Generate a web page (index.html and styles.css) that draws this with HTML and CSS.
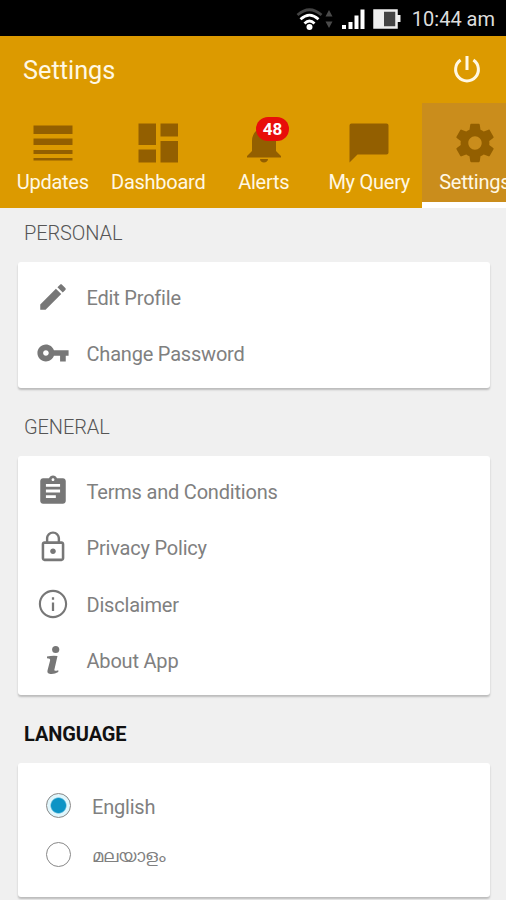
FILE: index.html
```html
<!DOCTYPE html>
<html lang="en">
<head>
<meta charset="utf-8">
<title>Settings</title>
<link rel="stylesheet" href="styles.css">
</head>
<body>
    <div class="statusbar">
        <svg class="wifi" width="27" height="24" viewBox="0 0 27 24" fill="none" stroke-width="2.800">
            <path d="M1.500 8Q13.500 -2.500 25.500 8" stroke="#444"/>
            <path d="M4.500 12.200Q13.500 4 22.500 12.200M8.500 16.500Q13.500 11.500 18.500 16.500" stroke="#fff"/>
            <circle cx="13.500" cy="20" r="3" fill="#fff"/>
        </svg>
        <svg class="updown" width="8" height="19" viewBox="0 0 8 19" fill="#4a4a4a">
            <path d="M4 0l3.500 6.500h-7zM4 18L.5 11.500h7z"/>
        </svg>
        <svg class="signal" width="25" height="22" viewBox="0 0 25 22" fill="#fff">
            <path d="M1 17h4v4H1zM7.500 14h4v7h-4zM13.500 7.500h4V21h-4zM19.500 1.500h4V21h-4z"/>
        </svg>
        <svg class="battery" width="28" height="20" viewBox="0 0 28 20">
            <path d="M1.500 1.500h22v17h-22z" fill="#444" stroke="#eee" stroke-width="2.500"/>
            <path d="M2 2h9v16H2zM24 6h3.500v7H24z" fill="#eee"/>
        </svg>
        <span class="clock">10:44 am</span>
    </div>

    <div class="header">
        <h1>Settings</h1>
        <svg class="power" width="28" height="28" viewBox="0 0 28 28" fill="none" stroke="#fff8e4" stroke-width="3">
            <path d="M14 1v14M7.600 5.100a11.400 11.400 0 1 0 12.800 0"/>
        </svg>
    </div>

    <div class="tabs">
        <div class="tab">
            <svg width="42" height="40" viewBox="0 0 42 40"><path d="M1.500 2.500h39V11h-39zM1.500 15.500h39v6.500h-39zM1.500 27h39v4h-39zM1.500 35h39v2.500h-39z"/></svg>
            <span>Updates</span>
        </div>
        <div class="tab">
            <svg width="40" height="40" viewBox="0 0 40 40"><path d="M.5.500H18v21.500H.500zM22.500.500H40v13H22.500zM.500 26.500H18v13H.500zM22.500 18H40v21.500H22.500z"/></svg>
            <span>Dashboard</span>
        </div>
        <div class="tab">
            <svg width="40" height="40" viewBox="0 0 40 40"><path d="M20 39.500c2.200 0 4-1.500 4-3.500h-8c0 2 1.800 3.500 4 3.500zM32 28V18c0-6.100-3.300-11.300-9-12.600V4a3 3 0 0 0-6 0v1.400C11.300 6.700 8 11.900 8 18v10l-5 5v1.500h34V33z"/></svg>
            <b class="badge">48</b>
            <span>Alerts</span>
        </div>
        <div class="tab">
            <svg width="40" height="40" viewBox="0 0 40 40"><path d="M2.500.500h35a2 2 0 0 1 2 2v27a2 2 0 0 1-2 2H8.500L.500 39.500v-37a2 2 0 0 1 2-2z"/></svg>
            <span>My Query</span>
        </div>
        <div class="tab active">
            <svg width="46" height="46" viewBox="0 0 24 24"><path d="M19.430 12.980c.04-.32.07-.64.07-.98s-.03-.66-.07-.98l2.110-1.650c.19-.15.240-.42.120-.64l-2-3.460c-.12-.22-.39-.3-.61-.22l-2.490 1c-.52-.4-1.080-.73-1.690-.98l-.38-2.650C14.460 2.180 14.250 2 14 2h-4c-.25 0-.46.180-.49.420l-.38 2.650c-.61.250-1.170.590-1.690.980l-2.490-1c-.23-.09-.49 0-.61.220l-2 3.460c-.13.220-.07.490.120.640l2.110 1.650c-.04.320-.07.650-.07.980s.03.660.07.980l-2.110 1.650c-.19.150-.24.420-.12.640l2 3.460c.12.220.39.300.610.220l2.490-1c.52.400 1.080.730 1.690.980l.38 2.650c.03.240.240.420.490.420h4c.25 0 .46-.18.490-.42l.38-2.650c.61-.25 1.170-.59 1.690-.98l2.490 1c.23.090.490 0 .610-.22l2-3.460c.12-.22.070-.49-.12-.64l-2.110-1.650zM12 15.500c-1.930 0-3.500-1.570-3.500-3.500s1.570-3.500 3.500-3.500 3.500 1.570 3.500 3.500-1.570 3.500-3.500 3.500z"/></svg>
            <span>Settings</span>
        </div>
    </div>

    <h2 class="first">PERSONAL</h2>
    <div class="card">
        <div class="row">
            <svg width="34" height="34" viewBox="0 0 24 24"><path d="M3 17.250V21h3.750L17.810 9.940l-3.750-3.750L3 17.250zM20.710 7.040c.39-.39.390-1.020 0-1.410l-2.340-2.340c-.39-.39-1.020-.39-1.410 0l-1.830 1.830 3.750 3.750 1.830-1.830z"/></svg>
            <span>Edit Profile</span>
        </div>
        <div class="row">
            <svg width="34" height="34" viewBox="0 0 24 24"><path d="M12.650 10C11.830 7.670 9.610 6 7 6c-3.310 0-6 2.690-6 6s2.690 6 6 6c2.610 0 4.830-1.670 5.650-4H17v4h4v-4h2v-4H12.650zM7 14c-1.100 0-2-.9-2-2s.9-2 2-2 2 .9 2 2-.9 2-2 2z"/></svg>
            <span>Change Password</span>
        </div>
    </div>

    <h2>GENERAL</h2>
    <div class="card general">
        <div class="row">
            <svg width="34" height="34" viewBox="0 0 24 24"><path d="M19 3h-4.180C14.400 1.840 13.300 1 12 1c-1.300 0-2.400.84-2.820 2H5c-1.100 0-2 .9-2 2v14c0 1.100.9 2 2 2h14c1.100 0 2-.9 2-2V5c0-1.100-.9-2-2-2zm-7 0c.55 0 1 .45 1 1s-.45 1-1 1-1-.45-1-1 .45-1 1-1zm2 14H7v-2h7v2zm3-4H7v-2h10v2zm0-4H7V7h10v2z"/></svg>
            <span>Terms and Conditions</span>
        </div>
        <div class="row">
            <svg width="34" height="34" viewBox="0 0 24 24"><path d="M12 17c1.100 0 2-.9 2-2s-.9-2-2-2-2 .9-2 2 .9 2 2 2zm6-9h-1V6c0-2.760-2.240-5-5-5S7 3.240 7 6v2H6c-1.100 0-2 .9-2 2v10c0 1.100.9 2 2 2h12c1.100 0 2-.9 2-2V10c0-1.100-.9-2-2-2zM8.700 6c0-1.800 1.500-3.300 3.300-3.300s3.300 1.500 3.300 3.300v2H8.700V6zM18.200 20.200H5.800V9.800h12.400v10.400z"/></svg>
            <span>Privacy Policy</span>
        </div>
        <div class="row">
            <svg width="34" height="34" viewBox="0 0 24 24"><path d="M11.200 17h1.600v-6h-1.600v6zM12 2C6.480 2 2 6.480 2 12s4.480 10 10 10 10-4.480 10-10S17.520 2 12 2zm0 18.500c-4.700 0-8.500-3.800-8.500-8.500s3.800-8.500 8.500-8.500 8.500 3.800 8.500 8.500-3.800 8.500-8.500 8.500zM11.200 9h1.600V7.300h-1.600V9z"/></svg>
            <span>Disclaimer</span>
        </div>
        <div class="row">
            <svg width="34" height="34" viewBox="0 0 34 34"><circle cx="19.700" cy="6.500" r="3.600"/><path d="M11 13.500q5-1 10.500-.5l-3.200 14q-.3 1.500 4 .3v1.700q-4 2.500-8 2-3.500-.5-2.800-3.500l2.600-10q.5-2.200-3.100-2.200z"/></svg>
            <span>About App</span>
        </div>
    </div>

    <h2 class="bold">LANGUAGE</h2>
    <div class="card languages">
        <label class="choice"><i class="radio checked"></i><span>English</span></label>
        <label class="choice"><i class="radio"></i><span class="ml" lang="ml">മലയാളം</span></label>
    </div>
</body>
</html>
```

FILE: styles.css
```css
* {box-sizing: border-box;}
body {
    margin: 0;
    height: 900px;
    overflow: hidden;
    background: #f0f0f0;
    font-family: Roboto, "Liberation Sans", sans-serif;
    color: #808080;}
svg {display: block; flex: none;}

.statusbar {
    display: flex;
    align-items: center;
    justify-content: flex-end;
    height: 36px;
    padding: 2px 11px 0 0;
    background: #000;
    color: #ddd;}
.updown {margin: 0 8px 0 2px;}
.signal {margin-right: 7px;}
.battery {margin-right: 11px;}
.clock {font-size: 20px; line-height: 34px;}

.header {
    display: flex;
    align-items: center;
    justify-content: space-between;
    height: 67px;
    padding: 0 25px 2px 23px;
    background: #dc9a00;
    color: #fff8e4;}
.header h1 {
    margin: 4px 0 0;
    font-size: 25.3px;
    font-weight: 400;}

.tabs {
    display: flex;
    height: 105px;
    background: #dc9a00;
    color: #fff8e4;}
.tab {
    position: relative;
    display: flex;
    flex: none;
    flex-direction: column;
    align-items: center;
    width: 105.5px;
    padding-top: 20px;
    fill: #935f00;}
.tab span {
    margin-top: 7px;
    font-size: 20px;
    line-height: 24px;
    letter-spacing: -.25px;
    white-space: nowrap;}
.tab.active {
    padding-top: 17px;
    background: #ca8d1c;
    border-bottom: 6px solid #fff;}
.tab.active span {margin-top: 4px;}
.badge {
    position: absolute;
    left: 45px;
    top: 14px;
    width: 33px;
    height: 24px;
    border-radius: 12px;
    background: #e80e0a;
    color: #fff;
    font-size: 17px;
    line-height: 25px;
    text-align: center;}

h2 {
    margin: 0;
    height: 68px;
    padding: 27px 24px 0;
    font-size: 20px;
    font-weight: 300;
    line-height: 24px;
    letter-spacing: -.1px;
    color: #555;}
h2.first {height: 54px; padding-top: 13px;}
h2.bold {
    font-weight: 700;
    color: #111;}

.card {
    margin: 0 16px 0 18px;
    height: 126px;
    padding-top: 7px;
    border-radius: 3px;
    background: #fff;
    box-shadow: 0 2px 2px rgba(0,0,0,.22);}
.general {height: 239px;}
.languages {
    height: 134px;
    padding-top: 18px;}
.row {
    display: flex;
    align-items: center;
    height: 56.3px;
    padding-left: 17.5px;
    font-size: 20px;
    letter-spacing: -.2px;
    fill: #777;}
.row span {margin: 2px 0 0 17px;}

.choice {
    display: flex;
    align-items: center;
    height: 49px;
    padding-left: 28px;
    font-size: 20px;
    letter-spacing: -.2px;}
.choice span {margin: 2px 0 0 21px;}
.choice .ml {
    font-size: 18px;
    letter-spacing: 0;}
.radio {
    width: 25px;
    height: 25px;
    border: 1.500px solid #888;
    border-radius: 50%;}
.checked {
    background: radial-gradient(circle, #0c93c5 0 7px, #e0f6fc 8.5px);}
```
